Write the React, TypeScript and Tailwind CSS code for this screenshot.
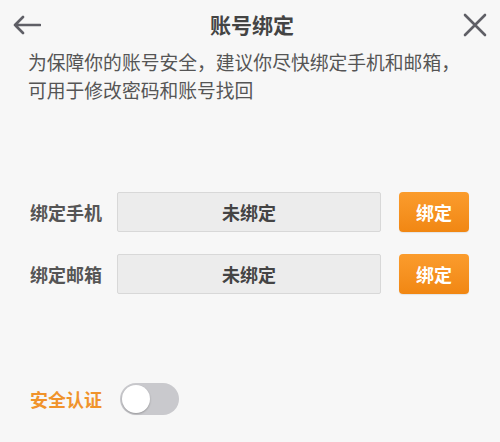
export default function App() {
  const rows = [
    { label: "绑定手机", value: "未绑定" },
    { label: "绑定邮箱", value: "未绑定" },
  ];

  return (
    <div
      className="h-[442px] w-[500px] bg-[#f7f7f7] text-[#555]"
      style={{ fontFamily: '"Noto Sans CJK SC", "Noto Sans", sans-serif' }}
    >
      {/* Header */}
      <div className="flex h-[50px] items-center justify-between px-[13px]">
        <svg width="28" height="20" viewBox="0 0 28 20" fill="none" stroke="#5f5f66" strokeWidth="2.6" strokeLinecap="round" strokeLinejoin="round">
          <path d="M27 10H2M10 2L2 10l8 8" />
        </svg>
        <h1 className="-mt-[2px] text-[21px] font-bold leading-none text-[#444]">账号绑定</h1>
        <svg width="24" height="24" viewBox="0 0 24 24" fill="none" stroke="#5f5f66" strokeWidth="2.6" strokeLinecap="round">
          <path d="M2 2l20 20M22 2L2 22" />
        </svg>
      </div>

      {/* Notice */}
      <p className="-mt-[2px] px-[28px] text-[18.8px] leading-[28px] text-[#555]">
        为保障你的账号安全，建议你尽快绑定手机和邮箱，
        <br />
        可用于修改密码和账号找回
      </p>

      {/* Binding rows */}
      <div className="mt-[88px] flex flex-col gap-[22px] pl-[30px]">
        {rows.map((r) => (
          <div key={r.label} className="flex items-center">
            <span className="w-[87px] text-[18px] font-semibold text-[#555]">{r.label}</span>
            <div className="flex h-[40px] w-[264px] items-center justify-center rounded-[2px] border border-[#d8d8d8] bg-[#ececec] text-[18px] font-semibold text-[#444]">
              {r.value}
            </div>
            <button className="ml-[18px] flex h-[40px] w-[70px] items-center justify-center rounded-[4px] bg-gradient-to-b from-[#fb9c2c] to-[#f18712] text-[18px] font-semibold text-white shadow-[0_1px_1px_rgba(0,0,0,0.08)]">
              绑定
            </button>
          </div>
        ))}
      </div>

      {/* Security toggle */}
      <div className="mt-[89px] flex items-center pl-[30px]">
        <span className="w-[90px] text-[18px] font-semibold text-[#f0932b]">安全认证</span>
        <div className="flex h-[32px] w-[59px] items-center rounded-full bg-[#c9c9cd] px-[2px]">
          <div className="h-[28px] w-[28px] rounded-full bg-white shadow-[0_1px_2px_rgba(0,0,0,0.25)]" />
        </div>
      </div>
    </div>
  );
}
